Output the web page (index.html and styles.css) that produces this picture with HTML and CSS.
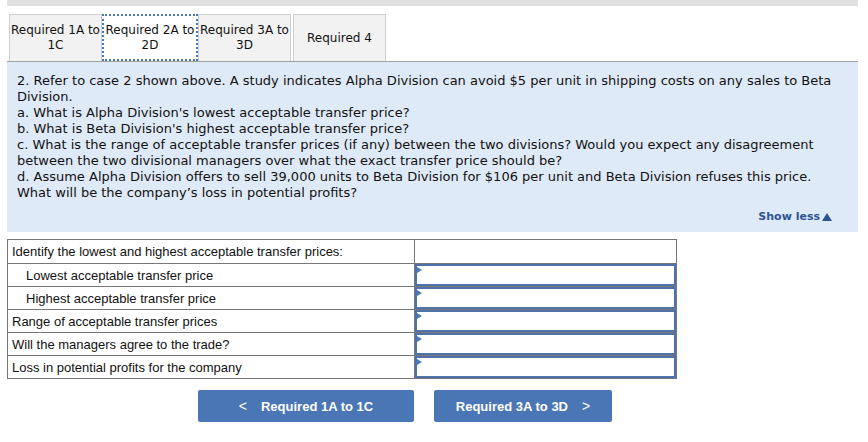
FILE: index.html
```html
<!DOCTYPE html>
<html>
<head>
<meta charset="utf-8">
<link rel="stylesheet" href="styles.css">
</head>
<body>
<div class="page">
  <div class="topbar"></div>
  <div class="tabs">
    <div class="tab">Required 1A to<br>1C</div>
    <div class="tab active">Required 2A to<br>2D</div>
    <div class="tab">Required 3A to<br>3D</div>
    <div class="tab last">Required 4</div>
  </div>
  <div class="panel">
    <p class="q">2. Refer to case 2 shown above. A study indicates Alpha Division can avoid $5 per unit in shipping costs on any sales to Beta Division.<br>
    a. What is Alpha Division's lowest acceptable transfer price?<br>
    b. What is Beta Division's highest acceptable transfer price?<br>
    c. What is the range of acceptable transfer prices (if any) between the two divisions? Would you expect any disagreement between the two divisional managers over what the exact transfer price should be?<br>
    d. Assume Alpha Division offers to sell 39,000 units to Beta Division for $106 per unit and Beta Division refuses this price. What will be the company’s loss in potential profits?</p>
    <div class="showless">Show less<span class="tri"></span></div>
  </div>
  <table class="grid">
    <colgroup><col class="c1"><col class="c2"></colgroup>
    <tr class="head"><td class="lbl">Identify the lowest and highest acceptable transfer prices:</td><td class="blank"></td></tr>
    <tr><td class="lbl indent">Lowest acceptable transfer price</td><td class="inp"><div class="box"><span class="flag"></span></div></td></tr>
    <tr><td class="lbl indent">Highest acceptable transfer price</td><td class="inp"><div class="box"><span class="flag"></span></div></td></tr>
    <tr><td class="lbl">Range of acceptable transfer prices</td><td class="inp"><div class="box"><span class="flag"></span></div></td></tr>
    <tr><td class="lbl">Will the managers agree to the trade?</td><td class="inp"><div class="box"><span class="flag"></span></div></td></tr>
    <tr><td class="lbl">Loss in potential profits for the company</td><td class="inp"><div class="box"><span class="flag"></span></div></td></tr>
  </table>
  <div class="nav">
    <button class="btn prev"><span class="chev">&lt;</span>Required 1A to 1C</button>
    <button class="btn next">Required 3A to 3D<span class="chev">&gt;</span></button>
  </div>
</div>
</body>
</html>
```
FILE: styles.css
```css
html, body { margin: 0; padding: 0; background: #fff; }
.page { width: 851px; margin-left: 7px; font-family: "DejaVu Sans", Verdana, sans-serif; }
.topbar { height: 6px; background: #e0e0e0; }
.tabs { display: flex; margin-top: 8px; padding-left: 2px; border-bottom: 1px solid #a0a0a0; height: 47px; }
.tab { box-sizing: border-box; width: 93px; height: 47px; background: #f2f2f2; border: 1px solid #cfcfcf; border-bottom: none; font-size: 12px; line-height: 15px; color: #111; text-align: center; display: flex; align-items: center; justify-content: center; }
.tab.active { background: #fff; width: 96px; border: 2px dotted #4a78b8; }
.tab.last { margin-left: 2px; }
.panel { background: #dfeaf8; height: 170px; box-sizing: border-box; padding: 11px 10px 0 10px; position: relative; }
.q { margin: 0; font-size: 13px; line-height: 16px; color: #111; }
.showless { position: absolute; right: 26px; bottom: 9px; font-size: 11px; font-weight: bold; color: #2d5592; display: flex; align-items: center; }
.tri { display: inline-block; width: 0; height: 0; margin-left: 2px; border-left: 5px solid transparent; border-right: 5px solid transparent; border-bottom: 8px solid #2d5592; }
.grid { margin-top: 7px; border-collapse: collapse; table-layout: fixed; width: 669px; font-family: "Liberation Sans", Arial, sans-serif; font-size: 13px; color: #111; }
.c1 { width: 407px; }
.c2 { width: 262px; }
.grid td { border: 1px solid #777; padding: 0; height: 22px; white-space: nowrap; }
.grid tr.head td { height: 23px; }
.lbl { padding-left: 4px !important; }
.lbl.indent { padding-left: 18px !important; }
.inp { vertical-align: top; }
.box { position: relative; box-sizing: border-box; height: 22px; border: 2px solid #4f72aa; }
.flag { position: absolute; left: 0; top: 1px; width: 0; height: 0; border-top: 3px solid transparent; border-bottom: 3px solid transparent; border-left: 5px solid #4a78c0; }
.nav { display: flex; gap: 20px; padding-left: 191px; margin-top: 11px; }
.btn { box-sizing: border-box; height: 32px; background: #4a76b5; color: #fff; border: none; border-radius: 2px; font-family: "Liberation Sans", Arial, sans-serif; font-weight: bold; font-size: 13px; display: flex; align-items: center; justify-content: center; padding: 0; }
.btn.prev { width: 216px; }
.btn.next { width: 178px; }
.chev { font-weight: normal; font-size: 14px; }
.prev .chev { margin-right: 14px; }
.next .chev { margin-left: 14px; }
```
